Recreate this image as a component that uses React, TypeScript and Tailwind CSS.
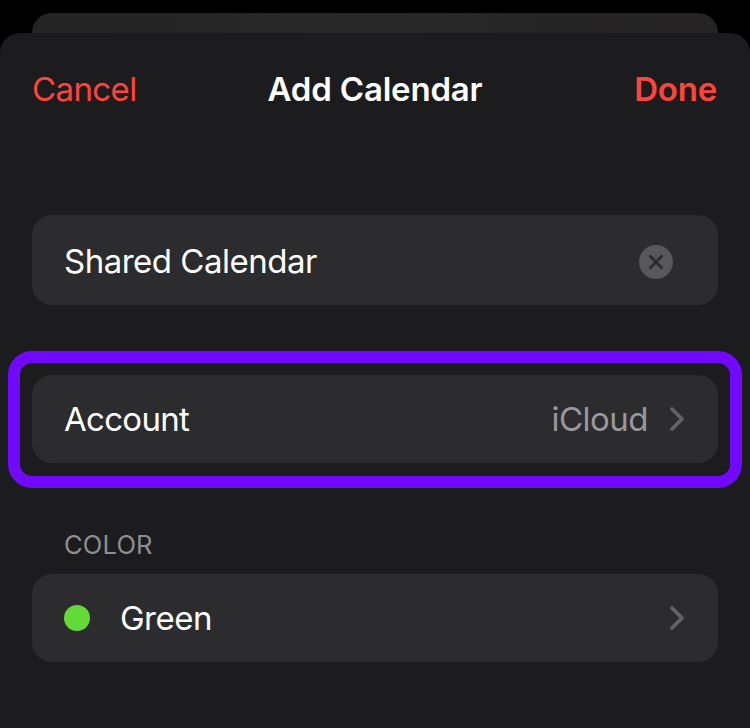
import React from 'react';

function Chevron() {
  return (
    <svg className="h-[26px] w-4 shrink-0" viewBox="0 0 16 26" fill="none">
      <path d="M3 3 L13 13 L3 23" stroke="#636366" strokeWidth="3.8" strokeLinecap="round" strokeLinejoin="round" />
    </svg>
  );
}

export default function App() {
  return (
    <div className="h-[728px] w-[750px] overflow-hidden bg-black pt-[13px] font-['Inter',sans-serif] text-[33px] leading-[44px] tracking-[-0.5px] text-white">
      <div className="mx-8 h-5 rounded-t-[20px] bg-linear-to-r from-[#242424] via-[#282828] to-[#252323]" />
      <main className="h-[695px] rounded-t-[20px] bg-[#1c1c1e]">
        <header className="grid grid-cols-3 px-8 pt-[34px] text-[#ff453a]">
          <button className="text-left tracking-[-0.6px]">Cancel</button>
          <h1 className="whitespace-nowrap text-center font-semibold tracking-[-0.2px] text-white">Add Calendar</h1>
          <button className="pr-px text-right font-semibold tracking-[-0.2px]">Done</button>
        </header>
        <section className="mx-8 mt-[104px] flex h-[90px] items-center justify-between rounded-[20px] bg-[#2c2c2e] pl-8 pr-[45px] pt-1">
          <span className="pb-0.5">Shared Calendar</span>
          <svg className="size-[34px]" viewBox="0 0 34 34">
            <circle cx="17" cy="17" r="17" fill="#58585a" />
            <path d="M11.3 11.3 L22.7 22.7 M22.7 11.3 L11.3 22.7" stroke="#2c2c2e" strokeWidth="2.8" strokeLinecap="round" />
          </svg>
        </section>
        <section className="mx-2 mt-[46px] h-[137px] rounded-[24px] border-[12px] border-[#7209ff] p-3">
          <div className="flex h-[88px] items-center rounded-[20px] bg-[#2c2c2e] pl-8 pr-[33px]">
            <span className="pb-px tracking-[-0.7px]">Account</span>
            <span className="ml-auto mr-[21px] pb-px tracking-[-0.5px] text-[#98989f]">iCloud</span>
            <Chevron />
          </div>
        </section>
        <h2 className="ml-16 mt-[40px] text-[25.5px] leading-[34px] tracking-[0.2px] text-[#8d8d93]">COLOR</h2>
        <section className="mx-8 mt-3 flex h-[88px] items-center rounded-[20px] bg-[#2c2c2e] pl-8 pr-[33px]">
          <span className="mr-[30px] size-[26px] rounded-full bg-[#63da38]" />
          <span className="mr-auto pb-px">Green</span>
          <Chevron />
        </section>
      </main>
    </div>
  );
}
